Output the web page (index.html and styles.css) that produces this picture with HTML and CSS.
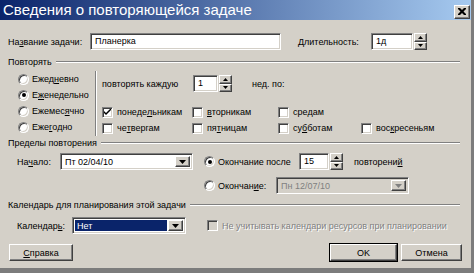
FILE: index.html
```html
<!DOCTYPE html>
<html lang="ru">
<head>
  <meta charset="UTF-8" />
  <title>Сведения о повторяющейся задаче</title>
  <link rel="stylesheet" href="styles.css">
</head>
<body>

  <div class="window">
    <div class="titlebar">
      <span class="title">Сведения о повторяющейся задаче</span>
      <span class="close-btn raised">
        <svg width="8" height="7" viewBox="0 0 8 7"><path d="M0 0h2l2 2 2-2h2v1L5.5 3.5 8 6v1H6L4 5 2 7H0V6l2.5-2.5L0 1z" fill="#000"/></svg>
      </span>
    </div>

    <div class="content">
      <div class="row row-task">
        <span class="lbl lbl-name">На<u>з</u>вание задачи:</span>
        <div class="field field-name">Планерка</div>
        <span class="lbl lbl-dur">Длительность:</span>
        <div class="field field-dur">1д</div>
        <div class="spin">
          <span class="raised"><svg width="5" height="3"><path d="M2.5 0L5 3H0z"/></svg></span>
          <span class="raised"><svg width="5" height="3"><path d="M0 0h5L2.5 3z"/></svg></span>
        </div>
      </div>

      <div class="group-head"><span>Повторять</span></div>
      <div class="repeat">
        <div class="freq">
          <div class="opt"><span class="radio"></span>Ежед<u>н</u>евно</div>
          <div class="opt"><span class="radio checked"></span>Е<u>ж</u>енедельно</div>
          <div class="opt"><span class="radio"></span>Ежемес<u>я</u>чно</div>
          <div class="opt"><span class="radio"></span>Еже<u>г</u>одно</div>
        </div>
        <div class="weekly">
          <div class="row every">
            <span class="lbl lbl-every">повторять каждую</span>
            <div class="field field-every">1</div>
            <div class="spin">
              <span class="raised"><svg width="5" height="3"><path d="M2.5 0L5 3H0z"/></svg></span>
              <span class="raised"><svg width="5" height="3"><path d="M0 0h5L2.5 3z"/></svg></span>
            </div>
            <span class="lbl lbl-week">нед. по:</span>
          </div>
          <div class="days">
            <div class="opt"><span class="check checked"><svg width="7" height="7" viewBox="0 0 7 7"><path d="M0 2v2l2 2 5-5V-1L2 4z" fill="#000"/></svg></span>понеде<u>л</u>ьникам</div>
            <div class="opt"><span class="check"></span><u>в</u>торникам</div>
            <div class="opt"><span class="check"></span>сре<u>д</u>ам</div>
            <div class="opt"></div>
            <div class="opt"><span class="check"></span>че<u>т</u>вергам</div>
            <div class="opt"><span class="check"></span>пя<u>т</u>ницам</div>
            <div class="opt"><span class="check"></span>су<u>б</u>ботам</div>
            <div class="opt"><span class="check"></span>вос<u>к</u>ресеньям</div>
          </div>
        </div>
      </div>

      <div class="group-head group-limits"><span>Пределы повторения</span></div>
      <div class="limits">
        <div class="row start">
          <span class="lbl lbl-start">На<u>ч</u>ало:</span>
          <div class="combo combo-start">
            <span class="combo-text">Пт 02/04/10</span>
            <span class="combo-btn raised"><svg width="7" height="4"><path d="M0 0h7L3.5 4z"/></svg></span>
          </div>
        </div>
        <div class="ends">
          <div class="row">
            <span class="radio checked"></span>
            <span class="lbl lbl-after">Окончание после</span>
            <div class="field field-count">15</div>
            <div class="spin">
              <span class="raised"><svg width="5" height="3"><path d="M2.5 0L5 3H0z"/></svg></span>
              <span class="raised"><svg width="5" height="3"><path d="M0 0h5L2.5 3z"/></svg></span>
            </div>
            <span class="lbl lbl-times">повторени<u>й</u></span>
          </div>
          <div class="row end-date">
            <span class="radio"></span>
            <span class="lbl lbl-end">Окончан<u>и</u>е:</span>
            <div class="combo combo-end disabled">
              <span class="combo-text">Пн 12/07/10</span>
              <span class="combo-btn raised"><svg width="7" height="4"><path d="M0 0h7L3.5 4z"/></svg></span>
            </div>
          </div>
        </div>
      </div>

      <div class="group-head group-cal"><span>Календарь для планирования этой задачи</span></div>
      <div class="row calendar">
        <span class="lbl lbl-cal">Календар<u>ь</u>:</span>
        <div class="combo combo-cal">
          <span class="combo-text selected">Нет</span>
          <span class="combo-btn raised"><svg width="7" height="4"><path d="M0 0h7L3.5 4z"/></svg></span>
        </div>
        <span class="check disabled"></span>
        <span class="lbl lbl-ignore">Не учитывать календари ресурсов при планировании</span>
      </div>

      <div class="row buttons">
        <button class="btn raised"><u>С</u>правка</button>
        <button class="btn btn-ok raised">OK</button>
        <button class="btn btn-cancel raised">Отмена</button>
      </div>
    </div>
  </div>

</body>
</html>
```

FILE: styles.css
```css
* {
  box-sizing: border-box;
}

body {
  margin: 0;
  font-family: "Liberation Sans", Arial, sans-serif;
  font-size: 9px;
  color: #000;
  background: #d4d0c8;
}

u {
  text-decoration: underline;
  text-underline-offset: 1px;
}

.window {
  width: 474px;
  height: 273px;
  background: #d4d0c8;
  border-right: 3px solid #7c7c7c;
  border-bottom: 5px solid #7c7c7c;
  display: flex;
  flex-direction: column;
}

.titlebar {
  height: 20px;
  background: linear-gradient(to right, #0a246a, #a6caf0);
  display: flex;
  align-items: center;
  justify-content: space-between;
  padding: 0 1px 0 3px;
}

.title {
  color: #fff;
  font-size: 15px;
  font-weight: normal;
  line-height: 20px;
}

.close-btn {
  width: 16px;
  height: 14px;
  display: flex;
  align-items: center;
  justify-content: center;
  margin-top: 3px;
}

/* classic 3d borders */
.raised {
  background: #d4d0c8;
  border: 1px solid;
  border-color: #fff #404040 #404040 #fff;
  box-shadow: inset -1px -1px #808080, inset 1px 1px #d4d0c8;
}

.field,
.combo {
  background: #fff;
  border: 1px solid;
  border-color: #808080 #fff #fff #808080;
  box-shadow: inset 1px 1px #404040, inset -1px -1px #d4d0c8;
  height: 17px;
  line-height: 15px;
  padding-left: 4px;
}

.content {
  flex: 1;
  padding: 0 11px 0 8px;
}

.row {
  display: flex;
  align-items: center;
}

.lbl {
  white-space: nowrap;
}

/* task row */
.row-task {
  margin-top: 13px;
}

.lbl-name {
  width: 82px;
}

.field-name {
  width: 191px;
}

.lbl-dur {
  margin-left: 17px;
  width: 73px;
}

.field-dur {
  width: 42px;
}

.spin {
  width: 13px;
  height: 17px;
  margin-left: 1px;
  display: flex;
  flex-direction: column;
}

.spin .raised {
  flex: 1;
  display: flex;
  align-items: center;
  justify-content: center;
}

/* group headers */
.group-head {
  display: flex;
  align-items: center;
  height: 12px;
  margin-top: 6px;
}

.group-head::after {
  content: "";
  flex: 1;
  margin-left: 4px;
  border-top: 1px solid #808080;
  border-bottom: 1px solid #fff;
}

/* repeat block */
.repeat {
  display: flex;
  margin-top: 3px;
  height: 65px;
}

.freq {
  width: 88px;
  padding-left: 10px;
  border-right: 1px solid #808080;
  box-shadow: 1px 0 #fff;
}

.opt {
  display: flex;
  align-items: center;
  height: 16px;
  white-space: nowrap;
}

.radio {
  width: 11px;
  height: 11px;
  border-radius: 50%;
  background: #fff;
  border: 1px solid;
  border-color: #808080 #fff #fff #808080;
  box-shadow: inset 1px 1px #404040, inset -1px -1px #d4d0c8;
  margin-right: 3px;
  flex: none;
  display: flex;
  align-items: center;
  justify-content: center;
}

.radio.checked::after {
  content: "";
  width: 4px;
  height: 4px;
  border-radius: 50%;
  background: #000;
}

.check {
  width: 11px;
  height: 11px;
  background: #fff;
  border: 1px solid;
  border-color: #808080 #fff #fff #808080;
  box-shadow: inset 1px 1px #404040, inset -1px -1px #d4d0c8;
  margin-right: 4px;
  flex: none;
  display: flex;
  align-items: center;
  justify-content: center;
}

.check.disabled {
  background: #d4d0c8;
}

.weekly {
  padding-left: 6px;
  padding-top: 4px;
}

.lbl-every {
  width: 91px;
}

.field-every {
  width: 25px;
}

.lbl-week {
  margin-left: 20px;
}

.days {
  margin-top: 12px;
  display: grid;
  grid-template-columns: 90px 86px 83px auto;
}

/* limits */
.group-limits {
  margin-top: 1px;
}

.limits {
  display: flex;
  margin-top: 4px;
}

.start {
  width: 196px;
  padding-left: 9px;
  align-self: flex-start;
}

.lbl-start {
  width: 43px;
}

.combo {
  display: flex;
  padding: 2px;
}

.combo-text {
  flex: 1;
  line-height: 13px;
  padding-left: 2px;
}

.combo-btn {
  width: 15px;
  display: flex;
  align-items: center;
  justify-content: center;
}

.combo-start {
  width: 133px;
}

.lbl-after {
  width: 81px;
}

.field-count {
  width: 30px;
}

.lbl-times {
  margin-left: 11px;
}

.end-date {
  margin-top: 7px;
}

.lbl-end {
  width: 58px;
}

.combo-end {
  width: 133px;
}

.disabled {
  background: #d4d0c8;
  color: #808080;
}

.disabled .combo-btn svg {
  fill: #808080;
}

/* calendar */
.group-cal {
  margin-top: 5px;
}

.calendar {
  margin-top: 6px;
  padding-left: 9px;
}

.lbl-cal {
  width: 55px;
}

.combo-cal {
  width: 114px;
  margin-right: 21px;
}

.selected {
  background: #0a246a;
  color: #fff;
  margin-right: 1px;
}

.lbl-ignore {
  color: #808080;
  text-shadow: 1px 1px #fff;
}

/* buttons */
.buttons {
  margin-top: 10px;
  padding-left: 1px;
  margin-right: -2px;
}

.btn {
  font-family: inherit;
  font-size: inherit;
  color: #000;
  height: 17px;
  padding: 0;
  width: 64px;
}

.btn-ok {
  margin-left: auto;
  width: 67px;
  outline: 1px solid #000;
}

.btn-cancel {
  width: 61px;
  margin-left: 4px;
}
```
